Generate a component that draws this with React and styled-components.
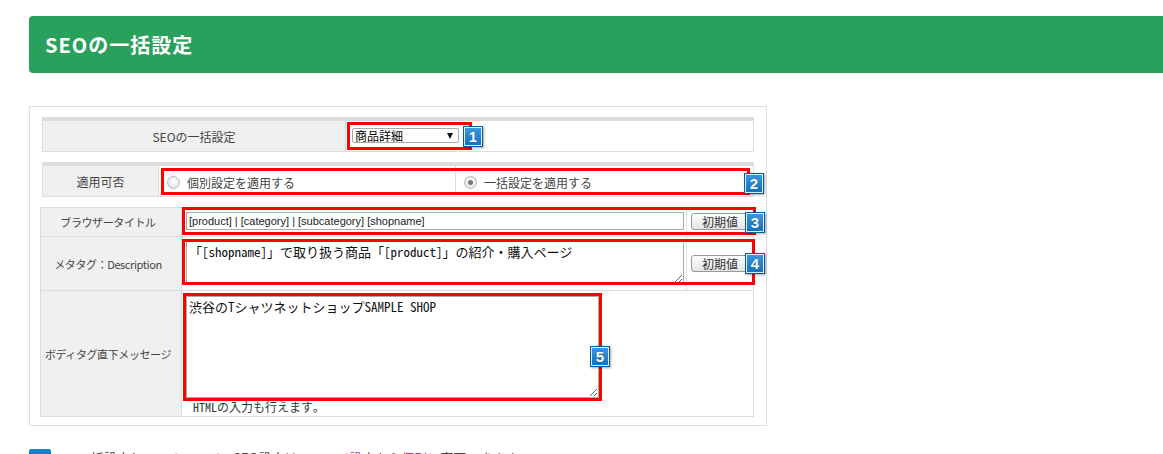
import React from "react"
import styled, { createGlobalStyle } from "styled-components"

const GlobalStyle = createGlobalStyle`
  body {
    margin: 0;
    background: #fff;
    color: #333;
    font-family: "Noto Sans CJK JP", "Liberation Sans", sans-serif;
  }
`

const Page = styled.div`
  padding: 16px 0 0 29px;
`

const Header = styled.h1`
  margin: 0;
  height: 57px;
  padding-left: 16px;
  background: #2aa05d;
  border-radius: 4px 0 0 4px;
  color: #fff;
  font-size: 20px;
  font-weight: bold;
  line-height: 57px;
  letter-spacing: 1px;
`

const Panel = styled.div`
  margin-top: 33px;
  width: 738px;
  box-sizing: border-box;
  border: 1px solid #ddd;
  padding: 10px 12px 8px 12px;
  display: flex;
  flex-direction: column;
  gap: 10px;
`

// the grid background shows through the 1px gaps as cell borders
const Table = styled.div`
  display: grid;
  grid-template-columns: ${p => p.$cols};
  grid-template-rows: ${p => p.$rows};
  gap: 1px;
  background: #ddd;
  padding: ${p => (p.$band ? "4px" : "1px")} 1px 1px;
  margin-left: ${p => p.$shift || 0}px;
`

const Label = styled.div`
  grid-column: 1;
  grid-row: ${p => p.$row || 1};
  background: #f0f0f0;
  display: flex;
  align-items: center;
  justify-content: center;
  padding-right: ${p => (p.$small ? "6px" : "0")};
  font-size: ${p => (p.$small ? "11px" : "12px")};
  letter-spacing: ${p => (p.$small ? "-0.4px" : "0")};
  color: #444;
  white-space: nowrap;
  overflow: hidden;
`

const Cell = styled.div`
  grid-column: ${p => p.$col};
  grid-row: ${p => p.$row || 1};
  background: #fff;
  display: flex;
  flex-direction: ${p => (p.$stack ? "column" : "row")};
  align-items: ${p => p.$align || "flex-start"};
  padding: ${p => p.$pad || "0"};
  min-width: 0;
`

const Mark = styled.div`
  grid-column: ${p => p.$col};
  grid-row: ${p => p.$row || 1};
  margin: ${p => p.$m};
  border: 3px solid #f00;
  position: relative;
  pointer-events: none;
  z-index: 1;
`

const MarkWrap = styled.div`
  position: relative;
  border: 3px solid #f00;
  width: ${p => p.$w};
  height: ${p => p.$h};
  padding: ${p => p.$pad || "0"};
  box-sizing: border-box;
  flex: none;
`

const Badge = styled.span`
  position: absolute;
  top: ${p => p.$top}px;
  right: ${p => p.$right}px;
  width: 20px;
  height: 21px;
  box-sizing: border-box;
  border: 1px solid #0d5a99;
  box-shadow: inset 0 0 0 1px rgba(255, 255, 255, 0.85), 1px 1px 2px rgba(0, 0, 0, 0.35);
  background: linear-gradient(#3a9be0, #0f6fbb);
  color: #fff;
  font: bold 15px/19px "Liberation Sans", Arial, sans-serif;
  text-align: center;
  text-shadow: 0 0 1px rgba(0, 0, 0, 0.4);
`

const SelectBox = styled.div`
  width: 107px;
  height: 15px;
  box-sizing: border-box;
  border: 1px solid #a9a9a9;
  border-radius: 2px;
  background: #fff;
  display: flex;
  align-items: center;
  justify-content: space-between;
  padding: 0 5px 0 2px;
  font-size: 12px;
  color: #000;
  line-height: 1;
`

const Arrow = styled.span`
  width: 0;
  height: 0;
  border-left: 3px solid transparent;
  border-right: 3px solid transparent;
  border-top: 6px solid #111;
`

const Radio = styled.label`
  display: flex;
  align-items: center;
  gap: 7px;
  font-size: 12px;
  color: #444;
  padding-top: 2px;
`

const Dot = styled.span`
  width: 13px;
  height: 13px;
  box-sizing: border-box;
  border-radius: 50%;
  border: 1px solid #b8b8b8;
  background: radial-gradient(circle at 50% 40%, #fff, #dcdcdc);
  display: flex;
  align-items: center;
  justify-content: center;
  &::after {
    content: "";
    width: 5px;
    height: 5px;
    border-radius: 50%;
    background: ${p => (p.$on ? "#777" : "transparent")};
  }
`

const TextInput = styled.input`
  width: 498px;
  height: 18px;
  box-sizing: border-box;
  border: 1px solid #a9a9a9;
  padding: 0 2px;
  font: 11px "Liberation Sans", Arial, sans-serif;
  color: #222;
`

const Area = styled.textarea`
  width: ${p => p.$w};
  height: ${p => p.$h};
  box-sizing: border-box;
  border: 1px solid #a9a9a9;
  padding: 2px;
  margin: 0;
  display: block;
  font: 13px/15px "Noto Sans Mono CJK JP", "Liberation Mono", "Noto Sans CJK JP", monospace;
  color: #111;
`

const ResetButton = styled.button`
  width: 58px;
  height: 17px;
  padding: 0;
  border: 1px solid #999;
  border-radius: 3px;
  background: linear-gradient(#fff, #e4e4e4);
  font: 12px/15px "Noto Sans CJK JP", sans-serif;
  color: #333;
`

const Help = styled.p`
  margin: 0 0 0 10px;
  font: 12px/12px "Noto Sans Mono CJK JP", "Liberation Mono", "Noto Sans CJK JP", monospace;
  color: #333;
`

const Note = styled.div`
  margin-top: 23px;
  display: flex;
  align-items: flex-start;
  gap: 27px;
  font-size: 13px;
  line-height: 18px;
  color: #444;
`

const NoteIcon = styled.span`
  width: 22px;
  height: 22px;
  border-radius: 2px;
  background: #0a86d0;
  flex: none;
`

const NoteLink = styled.span`
  color: #b0389a;
`

export default function App() {
  return (
    <>
      <GlobalStyle />
      <Page>
        <Header>SEOの一括設定</Header>

        <Panel>
          <Table $band $cols="302px 1fr" $rows="30px">
            <Label>SEOの一括設定</Label>
            <Cell $col="2" $pad="1px 0 0 1px">
              <MarkWrap $w="125px" $h="28px" $pad="3px 0 0 2px">
                <SelectBox>
                  <span>商品詳細</span>
                  <Arrow />
                </SelectBox>
                <Badge $top={1} $right={-14}>1</Badge>
              </MarkWrap>
            </Cell>
          </Table>

          <Table $band $cols="115px 296px 1fr" $rows="30px">
            <Label>適用可否</Label>
            <Cell $col="2" $align="center" $pad="0 0 0 8px">
              <Radio><Dot />個別設定を適用する</Radio>
            </Cell>
            <Cell $col="3" $align="center" $pad="0 0 0 8px">
              <Radio><Dot $on />一括設定を適用する</Radio>
            </Cell>
            <Mark $col="2 / 4" $m="2px 3px 1px 2px">
              <Badge $top={2} $right={-17}>2</Badge>
            </Mark>
          </Table>

          <Table $shift={-2} $cols="140px 1fr 66px" $rows="28px 53px 125px">
            <Label $small $row={1}>ブラウザータイトル</Label>
            <Cell $col="2" $row={1} $pad="4px 0 0 4px">
              <TextInput readOnly value="[product] | [category] | [subcategory] [shopname]" />
            </Cell>
            <Cell $col="3" $row={1} $pad="5px 0 0 4px">
              <ResetButton>初期値</ResetButton>
            </Cell>
            <Mark $col="2 / 4" $row={1} $m="-1px -3px 1px 0">
              <Badge $top={2} $right={-12}>3</Badge>
            </Mark>

            <Label $small $row={2}>メタタグ：Description</Label>
            <Cell $col="2" $row={2} $pad="4px 0 0 4px">
              <Area $w="498px" $h="43px" readOnly value="「[shopname]」で取り扱う商品「[product]」の紹介・購入ページ" />
            </Cell>
            <Cell $col="3" $row={2} $align="center" $pad="0 0 0 4px">
              <ResetButton>初期値</ResetButton>
            </Cell>
            <Mark $col="2 / 4" $row={2} $m="2px -2px 5px 0">
              <Badge $top={11} $right={-13}>4</Badge>
            </Mark>

            <Label $small $row={3}>ボディタグ直下メッセージ</Label>
            <Cell $col="2 / 4" $row={3} $stack $pad="2px 0 0 1px">
              <MarkWrap $w="419px" $h="108px">
                <Area $w="413px" $h="102px" readOnly value="渋谷のTシャツネットショップSAMPLE SHOP" />
                <Badge $top={50} $right={-11}>5</Badge>
              </MarkWrap>
              <Help>HTMLの入力も行えます。</Help>
            </Cell>
          </Table>
        </Panel>

        <Note>
          <NoteIcon />
          <span>
            一括設定しているページのSEO設定は、<NoteLink>ページ設定</NoteLink>から<NoteLink>個別</NoteLink>に変更できます。
          </span>
        </Note>
      </Page>
    </>
  )
}
